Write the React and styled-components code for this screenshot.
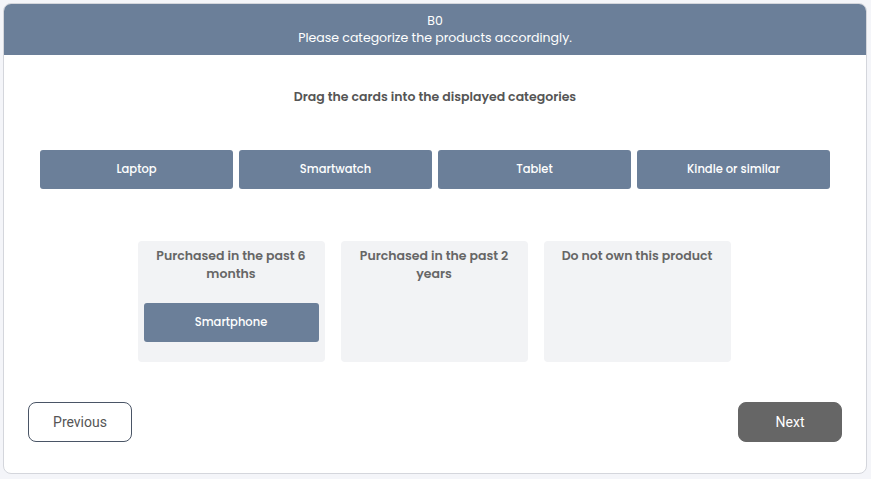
import styled, { createGlobalStyle } from "styled-components";

const GlobalStyle = createGlobalStyle`
  html, body {
    margin: 0;
    padding: 0;
    background: #f4f5f9;
  }
  body {
    font-family: Poppins, Inter, "Noto Sans", sans-serif;
  }
  * { box-sizing: border-box; }
`;

const Page = styled.div`
  width: 871px;
  height: 479px;
  padding: 3px 4px 5px 3px;
`;

const Card = styled.div`
  height: 471px;
  background: #fff;
  border: 1px solid #d4d6dc;
  border-radius: 8px;
  overflow: hidden;
  display: flex;
  flex-direction: column;
`;

const Header = styled.header`
  background: #6b7f99;
  color: #fff;
  text-align: center;
  font-size: 12.5px;
  line-height: 17px;
  padding: 8px 0 9px;
`;

const Body = styled.main`
  flex: 1;
  display: flex;
  flex-direction: column;
  padding: 33px 24px 0;
`;

const Instruction = styled.p`
  margin: 0;
  text-align: center;
  font-size: 12.5px;
  font-weight: 600;
  color: #555;
`;

const CardRow = styled.div`
  display: grid;
  grid-template-columns: repeat(4, 1fr);
  gap: 6px;
  padding: 0 12px;
  margin-top: 44px;
`;

const ProductCard = styled.div`
  height: 39px;
  border-radius: 3px;
  background: #6b7f99;
  color: #fff;
  font-size: 11.5px;
  font-weight: 500;
  display: flex;
  align-items: center;
  justify-content: center;
`;

const Categories = styled.div`
  display: flex;
  justify-content: center;
  gap: 16px;
  margin-top: 52px;
  padding-right: 2px;
`;

const Category = styled.section`
  width: 187px;
  height: 121px;
  background: #f2f3f5;
  border-radius: 4px;
  padding: 6px 6px;
  display: flex;
  flex-direction: column;
`;

const CategoryTitle = styled.h3`
  margin: 0 0 20px;
  text-align: center;
  font-size: 12.5px;
  line-height: 18px;
  font-weight: 600;
  color: #666;
  min-height: 36px;
`;

const Footer = styled.div`
  display: flex;
  justify-content: space-between;
  margin-top: 40px;
`;

const NavButton = styled.button`
  width: 104px;
  height: 40px;
  border-radius: 8px;
  font-family: Roboto, "Liberation Sans", sans-serif;
  font-size: 14px;
  cursor: pointer;
  border: 1px solid ${(p) => (p.$primary ? "#666" : "#4a5566")};
  background: ${(p) => (p.$primary ? "#666" : "#fff")};
  color: ${(p) => (p.$primary ? "#fff" : "#555")};
`;

const products = ["Laptop", "Smartwatch", "Tablet", "Kindle or similar"];

const categories = [
  { title: "Purchased in the past 6 months", items: ["Smartphone"] },
  { title: "Purchased in the past 2 years", items: [] },
  { title: "Do not own this product", items: [] },
];

export default function App() {
  return (
    <>
      <GlobalStyle />
      <Page>
        <Card>
          <Header>
            <div>B0</div>
            <div>Please categorize the products accordingly.</div>
          </Header>
          <Body>
            <Instruction>Drag the cards into the displayed categories</Instruction>
            <CardRow>
              {products.map((p) => (
                <ProductCard key={p}>{p}</ProductCard>
              ))}
            </CardRow>
            <Categories>
              {categories.map((c) => (
                <Category key={c.title}>
                  <CategoryTitle>{c.title}</CategoryTitle>
                  {c.items.map((i) => (
                    <ProductCard key={i}>{i}</ProductCard>
                  ))}
                </Category>
              ))}
            </Categories>
            <Footer>
              <NavButton>Previous</NavButton>
              <NavButton $primary>Next</NavButton>
            </Footer>
          </Body>
        </Card>
      </Page>
    </>
  );
}
